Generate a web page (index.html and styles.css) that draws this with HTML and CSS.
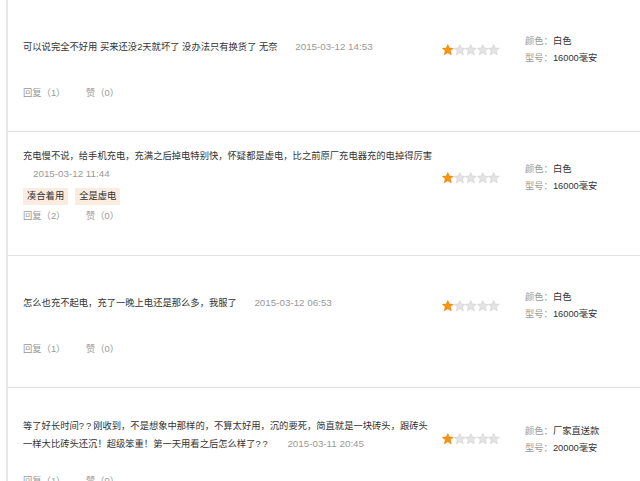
FILE: index.html
```html
<!DOCTYPE html>
<html lang="zh-CN">
<head>
    <meta charset="UTF-8">
    <title>商品评价</title>
    <link rel="stylesheet" href="styles.css">
</head>
<body>

<div class="review-list">

    <div class="review-item">
        <div class="review-main">
            <div class="review-text">可以说完全不好用 买来还没2天就坏了 没办法只有换货了 无奈 <span class="review-date">2015-03-12 14:53</span></div>
            <div class="review-actions">
                <span class="action">回复（1）</span>
                <span class="action">赞（0）</span>
            </div>
        </div>
        <div class="review-rating" data-score="1"></div>
        <div class="review-spec">
            <p><span class="spec-label">颜色：</span>白色</p>
            <p><span class="spec-label">型号：</span>16000毫安</p>
        </div>
    </div>

    <div class="review-item review-item--tagged">
        <div class="review-main">
            <div class="review-text">充电慢不说，给手机充电，充满之后掉电特别快，怀疑都是虚电，比之前原厂充电器充的电掉得厉害 <span class="review-date">2015-03-12 11:44</span></div>
            <div class="review-tags">
                <span class="tag">凑合着用</span>
                <span class="tag">全是虚电</span>
            </div>
            <div class="review-actions">
                <span class="action">回复（2）</span>
                <span class="action">赞（0）</span>
            </div>
        </div>
        <div class="review-rating" data-score="1"></div>
        <div class="review-spec">
            <p><span class="spec-label">颜色：</span>白色</p>
            <p><span class="spec-label">型号：</span>16000毫安</p>
        </div>
    </div>

    <div class="review-item">
        <div class="review-main">
            <div class="review-text">怎么也充不起电，充了一晚上电还是那么多，我服了 <span class="review-date">2015-03-12 06:53</span></div>
            <div class="review-actions">
                <span class="action">回复（1）</span>
                <span class="action">赞（0）</span>
            </div>
        </div>
        <div class="review-rating" data-score="1"></div>
        <div class="review-spec">
            <p><span class="spec-label">颜色：</span>白色</p>
            <p><span class="spec-label">型号：</span>16000毫安</p>
        </div>
    </div>

    <div class="review-item review-item--long">
        <div class="review-main">
            <div class="review-text">等了好长时间<span class="qm">??</span>刚收到，不是想象中那样的，不算太好用，沉的要死，简直就是一块砖头，跟砖头一样大比砖头还沉！超级笨重！第一天用看之后怎么样了<span class="qm">??</span> <span class="review-date">2015-03-11 20:45</span></div>
            <div class="review-actions">
                <span class="action">回复（1）</span>
                <span class="action">赞（0）</span>
            </div>
        </div>
        <div class="review-rating" data-score="1"></div>
        <div class="review-spec">
            <p><span class="spec-label">颜色：</span>厂家直送款</p>
            <p><span class="spec-label">型号：</span>20000毫安</p>
        </div>
    </div>

</div>

<script>
    // 根据评分画出星星
    var starPath = 'M6 0.4L7.6 4L11.7 4.3L8.6 6.9L9.6 11L6 8.8L2.4 11L3.4 6.9L0.3 4.3L4.4 4Z';

    function drawStars(box) {
        var score = parseInt(box.getAttribute('data-score'), 10);
        var html = '';
        for (var i = 0; i < 5; i++) {
            var cls = i < score ? 'star star--on' : 'star';
            html += '<svg class="' + cls + '" viewBox="0 0 12 12"><path d="' + starPath + '"/></svg>';
        }
        box.innerHTML = html;
    }

    var boxes = document.querySelectorAll('.review-rating');
    for (var i = 0; i < boxes.length; i++) {
        drawStars(boxes[i]);
    }
</script>
</body>
</html>
```

FILE: styles.css
```css
/* 评价列表 */
body {
    margin: 0;
    font-family: "Liberation Sans", "Noto Sans CJK SC", sans-serif;
    font-size: 9.3px;
    line-height: 17px;
    color: #333;
    background: #fff;
}
.review-list {
    margin-left: 6px;
    border-left: 2px solid #e8e8e8;
}
.review-item {
    display: flex;
    align-items: flex-start;
    padding: 0 0 29px 15px;
    border-bottom: 1px solid #e2e2e2;
}
.review-main {
    width: 419px;
    padding-top: 38px;
}
.review-text {
    min-height: 27px;
}
.qm {
    letter-spacing: 2px;
}
.review-date {
    margin-left: 15px;
    font-size: 9.8px;
    color: #999;
}
.review-tags {
    display: flex;
    gap: 7px;
    margin: 5px 0 3px;
}
.tag {
    padding: 0 4px;
    background: #fcece0;
    color: #333;
}
.review-actions {
    margin-top: 20px;
    color: #999;
}
.review-tags + .review-actions {
    margin-top: 0;
}
.action {
    margin-right: 18px;
}
.review-rating {
    width: 83px;
    display: flex;
    padding-top: 44px;
}
.star {
    width: 11.6px;
    height: 12px;
    fill: #e3e3e3;
    stroke: #cfcfcf;
    stroke-width: 0.6;
}
.star--on {
    fill: #f6950f;
    stroke: #e3820a;
}
.review-spec {
    padding-top: 33px;
}
.review-spec p {
    margin: 0;
}
.spec-label {
    color: #999;
}
/* 带标签的评价 */
.review-item--tagged {
    padding-bottom: 30px;
}
.review-item--tagged .review-main {
    padding-top: 16px;
}
.review-item--tagged .review-date {
    margin-left: 10px;
}
.review-item--tagged .review-rating {
    padding-top: 40px;
}
.review-item--tagged .review-spec {
    padding-top: 29px;
}
/* 两行的评价 */
.review-item--long .review-main {
    padding-top: 30px;
}
.review-item--long .review-text {
    padding-right: 7px;
}
.review-item--long .review-rating {
    padding-top: 45px;
}
.review-item--long .review-spec {
    padding-top: 35px;
}
```
